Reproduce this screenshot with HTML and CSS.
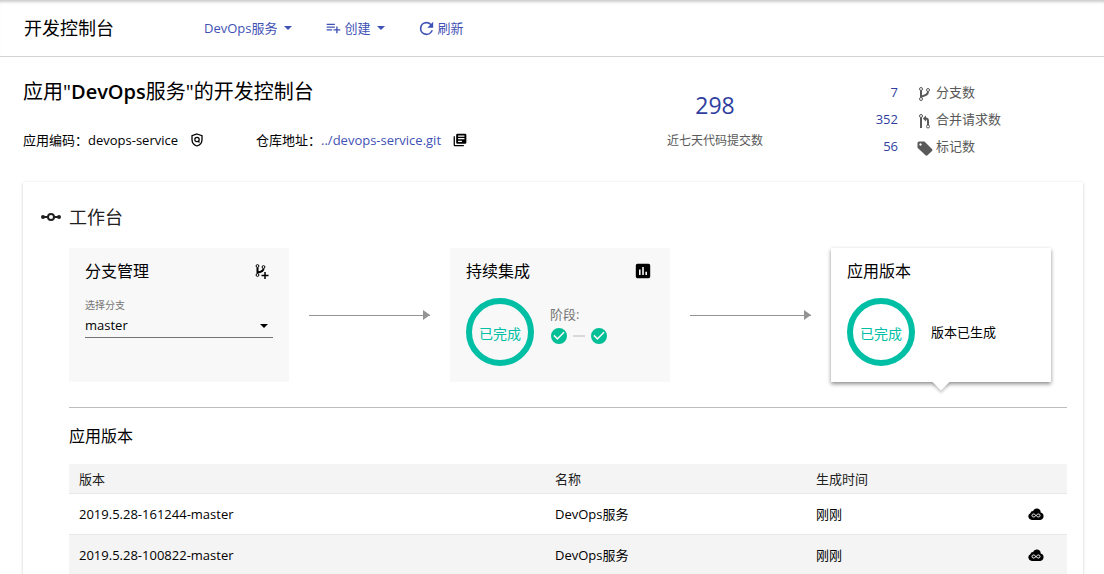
FILE: index.html
```html
<!DOCTYPE html>
<html lang="zh-CN">
<head>
<meta charset="utf-8">
<title>开发控制台</title>
<link rel="stylesheet" href="styles.css">
</head>
<body>
<header class="topbar">
  <h1 class="topbar-title">开发控制台</h1>
  <nav class="actions">
    <button class="action" type="button">DevOps服务<svg class="caret" viewBox="0 0 8 4"><path d="M0 0h8L4 4z"/></svg></button>
    <button class="action" type="button"><svg class="icon" viewBox="1 3 22 20"><path d="M14 10H2v2h12v-2zm0-4H2v2h12V6zm4 8v-4h-2v4h-4v2h4v4h2v-4h4v-2h-4zM2 16h8v-2H2v2z"/></svg>创建<svg class="caret" viewBox="0 0 8 4"><path d="M0 0h8L4 4z"/></svg></button>
    <button class="action" type="button"><svg class="icon" viewBox="3 3 18 18"><path d="M17.65 6.35A7.96 7.96 0 0 0 12 4a8 8 0 1 0 7.73 10h-2.08A6 6 0 1 1 12 6c1.66 0 3.14.69 4.22 1.78L13 11h7V4l-2.35 2.35z"/></svg>刷新</button>
  </nav>
</header>

<main class="page">
  <section class="summary">
    <div class="intro">
      <h2 class="app-title">应用"<span class="app-name">DevOps</span>服务"的开发控制台</h2>
      <div class="meta">
        <div class="meta-item"><span>应用编码：devops-service</span>
          <svg class="meta-icon" viewBox="0 0 14 14" fill="none" stroke="currentColor"><path d="M7 1L12 2.700V6.500C12 9.600 10 12 7 13C4 12 2 9.600 2 6.500V2.700z" stroke-width="1.300"/><circle cx="7" cy="6.500" r="2.200" stroke-width="1.200"/><path d="M8 8L9.500 9.500" stroke-width="1.200"/></svg>
        </div>
        <div class="meta-item"><span>仓库地址：<a class="repo" href="#">../devops-service.git</a></span>
          <svg class="meta-icon" viewBox="1 1 22 22"><path d="M4 6H2v14c0 1.100.9 2 2 2h14v-2H4V6zm16-4H8a2 2 0 0 0-2 2v12c0 1.100.9 2 2 2h12a2 2 0 0 0 2-2V4a2 2 0 0 0-2-2zm-1 9H9V9h10v2zm-4 4H9v-2h6v2zm4-8H9V5h10v2z"/></svg>
        </div>
      </div>
    </div>
    <div class="commits">
      <span class="commits-count">298</span>
      <span class="commits-label">近七天代码提交数</span>
    </div>
    <dl class="counts">
      <div class="count"><dd class="count-value">7</dd>
        <svg class="count-icon" viewBox="0 0 16 16" fill="none" stroke="currentColor"><circle cx="4" cy="3" r="1.500"/><circle cx="11" cy="4" r="1.500"/><circle cx="4" cy="13" r="1.500"/><path d="M4 4.500V11.500M11 5.500C11 9 8 9.500 4.500 10.500" stroke-width="2"/></svg>
        <dt class="count-label">分支数</dt></div>
      <div class="count"><dd class="count-value">352</dd>
        <svg class="count-icon" viewBox="0 0 16 16" fill="none" stroke="currentColor"><circle cx="4" cy="3" r="1.500"/><circle cx="11" cy="13.500" r="1.500"/><path d="M4 4.500V15M8 5.500H9C10.500 5.500 11 6.500 11 8V12" stroke-width="2"/><path d="M9 2.500V8.500L5.800 5.500z" fill="currentColor" stroke="none"/></svg>
        <dt class="count-label">合并请求数</dt></div>
      <div class="count"><dd class="count-value">56</dd>
        <svg class="count-icon" viewBox="0 0 16 16"><path fill-rule="evenodd" d="M0.500 3Q0.500 1.500 2 1.500H7.500L15 9Q16 10 15 11L10.500 15.300Q9.500 16 8.500 15.300L0.500 7.800zM3.500 3.300a1.200 1.200 0 1 0 .01 0z"/></svg>
        <dt class="count-label">标记数</dt></div>
    </dl>
  </section>

  <section class="panel">
    <h2 class="panel-title"><svg class="panel-icon" viewBox="0 0 20 12"><g fill="none" stroke="currentColor" stroke-width="2"><circle cx="10" cy="6" r="3"/><path d="M2 6H7M13 6H18"/></g><circle cx="2" cy="6" r="2"/><circle cx="18" cy="6" r="2"/></svg>工作台</h2>
    <div class="panel-body">
      <div class="flow">
        <article class="card">
          <div class="card-head"><h3 class="card-title">分支管理</h3>
            <svg class="card-icon" viewBox="0 0 16 16" fill="none" stroke="currentColor"><circle cx="3.500" cy="3" r="1.400"/><circle cx="9.500" cy="4" r="1.400"/><circle cx="3.500" cy="12" r="1.400"/><path d="M3.500 4.500V10.500M9.500 5.500C9.500 8 7 9 4 9.500" stroke-width="2"/><path d="M11 9V16M7.500 12.500H14.500" stroke-width="1.500"/></svg>
          </div>
          <div class="field">
            <label class="field-label" for="branch">选择分支</label>
            <div class="select-box">
              <select class="select" id="branch"><option>master</option></select>
              <svg class="caret" viewBox="0 0 8 4"><path d="M0 0h8L4 4z"/></svg>
            </div>
          </div>
        </article>
        <div class="arrow"></div>
        <article class="card">
          <div class="card-head"><h3 class="card-title">持续集成</h3>
            <svg class="card-icon" viewBox="2 2 20 20"><path d="M19 3H5a2 2 0 0 0-2 2v14c0 1.100.9 2 2 2h14a2 2 0 0 0 2-2V5a2 2 0 0 0-2-2zM9 17H7v-7h2v7zm4 0h-2V7h2v10zm4 0h-2v-4h2v4z"/></svg>
          </div>
          <div class="status">
            <div class="ring">已完成</div>
            <div class="stages">
              <span class="stages-label">阶段:</span>
              <div class="stages-row">
                <svg class="check" viewBox="2 2 20 20"><path d="M12 2a10 10 0 1 0 0 20 10 10 0 0 0 0-20zm-2 15l-5-5 1.410-1.410L10 14.170l7.590-7.590L19 8l-9 9z"/></svg>
                <span class="dash"></span>
                <svg class="check" viewBox="2 2 20 20"><path d="M12 2a10 10 0 1 0 0 20 10 10 0 0 0 0-20zm-2 15l-5-5 1.410-1.410L10 14.170l7.590-7.590L19 8l-9 9z"/></svg>
              </div>
            </div>
          </div>
        </article>
        <div class="arrow"></div>
        <article class="card card-active">
          <div class="card-head"><h3 class="card-title">应用版本</h3></div>
          <div class="status">
            <div class="ring">已完成</div>
            <span class="status-text">版本已生成</span>
          </div>
        </article>
      </div>

      <div class="versions">
        <h3 class="card-title">应用版本</h3>
        <table class="table">
          <thead><tr><th class="col-version">版本</th><th class="col-name">名称</th><th class="col-time">生成时间</th><th></th></tr></thead>
          <tbody>
            <tr><td>2019.5.28-161244-master</td><td>DevOps服务</td><td>刚刚</td><td class="cell-icon"><svg class="cloud" viewBox="0 0 16 12"><path d="M4 12A3.600 3.600 0 0 1 2.300 5.200A3 3 0 0 1 5 3A4 4 0 0 1 12.700 4.400A3.900 3.900 0 0 1 12.300 12z"/><path class="loop" d="M8 7.500C6.500 5.500 4 5.500 4 7.500S6.500 9.500 8 7.500S12 5.500 12 7.500S9.500 9.500 8 7.500z"/></svg></td></tr>
            <tr><td>2019.5.28-100822-master</td><td>DevOps服务</td><td>刚刚</td><td class="cell-icon"><svg class="cloud" viewBox="0 0 16 12"><path d="M4 12A3.600 3.600 0 0 1 2.300 5.200A3 3 0 0 1 5 3A4 4 0 0 1 12.700 4.400A3.900 3.900 0 0 1 12.300 12z"/><path class="loop" d="M8 7.500C6.500 5.500 4 5.500 4 7.500S6.500 9.500 8 7.500S12 5.500 12 7.500S9.500 9.500 8 7.500z"/></svg></td></tr>
          </tbody>
        </table>
      </div>
    </div>
  </section>
</main>
</body>
</html>
```
FILE: styles.css
```css
* { box-sizing: border-box; }
html { scrollbar-width: none; }
body {
  margin: 0;
  background: #fff;
  color: #000;
  font: 13px/20px "Open Sans", "Noto Sans CJK SC", sans-serif;
}
h1, h2, h3, dl, dd, dt { margin: 0; font-weight: 400; }
svg { display: block; fill: currentColor; flex: none; }
svg[fill="none"] { fill: none; }

.topbar {
  display: flex;
  align-items: center;
  height: 57px;
  padding-left: 24px;
  border-bottom: 1px solid #d3d3d3;
  box-shadow: inset 0 4px 3px -2px #ccc;
}
.topbar-title { width: 180px; font-size: 18px; line-height: 24px; }
.actions { display: flex; gap: 32px; }
.action {
  display: flex;
  align-items: center;
  gap: 4px;
  padding: 0;
  border: 0;
  background: none;
  color: #3f51b5;
  font: inherit;
}
.icon { width: 15px; height: 15px; }
.caret { width: 8px; height: 4px; margin: 0 2px; }

.page { padding: 0 21px 24px 23px; }
.summary { display: flex; height: 125px; padding-top: 21px; }
.intro { flex: 1; }
.app-title { font-size: 20px; line-height: 28px; }
.app-name { font-weight: 600; }
.meta { display: flex; gap: 52px; margin-top: 24px; }
.meta-item { display: flex; align-items: center; gap: 12px; white-space: nowrap; }
.meta-icon { width: 14px; height: 14px; }
.repo { color: #3f51b5; text-decoration: none; }
.commits { display: flex; flex-direction: column; align-items: center; width: 200px; padding-top: 11px; }
.commits-count { color: #303f9f; font-size: 23px; line-height: 32px; }
.commits-label { margin-top: 10px; color: #595959; font-size: 12px; }
.counts { width: 268px; padding-left: 38px; }
.count { display: flex; align-items: center; height: 27px; color: #595959; }
.count-value { width: 45px; color: #303f9f; text-align: right; }
.count-icon { width: 16px; height: 16px; margin: 4px 3px 0 19px; }

.panel { padding: 23px 16px 24px 18px; background: #fff; box-shadow: 0 1px 3px rgba(0, 0, 0, .2); }
.panel-title { display: flex; align-items: center; gap: 8px; color: #212121; font-size: 18px; line-height: 24px; }
.panel-icon { width: 20px; height: 12px; }
.panel-body { padding: 19px 0 0 28px; }
.flow { display: flex; align-items: stretch; padding-right: 16px; }
.card { position: relative; width: 220px; height: 134px; padding: 12px 16px; background: #f8f8f8; }
.card-active { background: #fff; box-shadow: 0 2px 4px rgba(0, 0, 0, .45); }
.card-active::after {
  content: "";
  position: absolute;
  left: 50%;
  bottom: -6px;
  width: 12px;
  height: 12px;
  margin-left: -6px;
  background: #fff;
  box-shadow: 2px 2px 3px rgba(0, 0, 0, .2);
  transform: rotate(45deg);
}
.card-head { display: flex; align-items: center; justify-content: space-between; }
.card-title { font-size: 16px; line-height: 22px; }
.card-icon { width: 16px; height: 16px; margin-right: 3px; }
.field { padding-top: 14px; }
.field-label { display: block; color: #757575; font-size: 10px; line-height: 18px; }
.select-box { display: flex; align-items: center; border-bottom: 1px solid #757575; }
.select {
  flex: 1;
  height: 23px;
  padding: 0 0 2px;
  border: 0;
  background: none;
  color: #000;
  font: inherit;
  appearance: none;
}
.select-box .caret { margin-right: 5px; }
.status { display: flex; align-items: center; gap: 16px; padding-top: 16px; }
.ring {
  display: flex;
  align-items: center;
  justify-content: center;
  width: 68px;
  height: 68px;
  padding-top: 4px;
  border: 6px solid #00bfa5;
  border-radius: 50%;
  color: #00bfa5;
  font-size: 14px;
}
.stages { color: #757575; }
.stages-row { display: flex; align-items: center; gap: 6px; padding: 4px 1px; margin-bottom: 12px; }
.check { width: 16px; height: 16px; color: #00bf96; }
.dash { width: 12px; height: 2px; background: #d8d8d8; }
.arrow {
  position: relative;
  flex: 1;
  height: 1px;
  margin: 67px 20px 0;
  background: #949494;
}
.arrow::after {
  content: "";
  position: absolute;
  right: 0;
  top: -5px;
  border: 5px solid transparent;
  border-left: 7px solid #949494;
  border-right: 0;
}

.versions { margin-top: 25px; padding-top: 17px; border-top: 1px solid #bdbdbd; }
.table { width: 100%; margin-top: 17px; border-collapse: separate; border-spacing: 0; table-layout: fixed; }
.table th, .table td { padding: 0 10px; border-bottom: 1px solid #e8e8e8; text-align: left; font-weight: 400; }
.table th { height: 30px; background: #f4f4f4; color: #212121; }
.table td { height: 41px; }
.table tbody tr:nth-child(even) { background: #f4f4f4; }
.table .col-version { width: 476px; }
.table .col-name { width: 261px; }
.table .col-time { width: 160px; }
.cloud { width: 16px; height: 12px; margin: 0 13px 0 auto; }
.loop { fill: none; stroke: #fff; stroke-width: 1; }
```
